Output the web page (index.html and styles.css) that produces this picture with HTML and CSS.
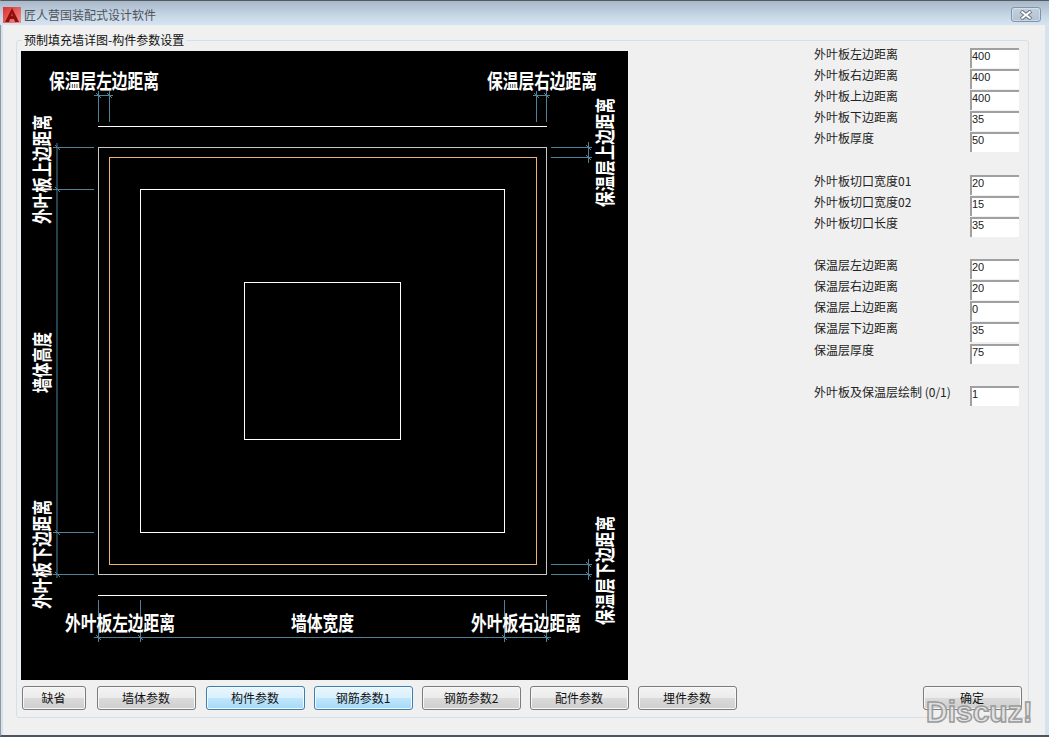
FILE: index.html
```html
<!DOCTYPE html>
<html lang="zh">
<head>
<meta charset="utf-8">
<title>匠人营国装配式设计软件</title>
<link rel="stylesheet" href="styles.css">
</head>
<body>
<div class="window">
  <header class="titlebar">
    <svg class="app-icon" width="18" height="16" viewBox="0 0 18 16">
      <defs><linearGradient id="ic" x1="0" y1="0" x2="1" y2="1"><stop offset="0" stop-color="#d8302e"/><stop offset="1" stop-color="#f08e88"/></linearGradient></defs>
      <rect width="18" height="16" fill="url(#ic)"/>
      <path d="M9 1 L16 15 L12 15 L11 12 L7 12 L6 15 L2 15 Z" fill="#8e0f0c"/>
      <path d="M9 6 L10 9 L8 9 Z" fill="#d8403a"/>
    </svg>
    <span class="title">匠人营国装配式设计软件</span>
    <button class="close" type="button" aria-label="关闭">
      <svg width="14" height="10" viewBox="0 0 14 10"><path d="M2 1 L12 9 M12 1 L2 9" stroke="#6d7682" stroke-width="4" fill="none"/><path d="M2.5 1.5 L11.5 8.5 M11.5 1.5 L2.5 8.5" stroke="#fff" stroke-width="2" fill="none"/></svg>
    </button>
  </header>
  <main class="group">
    <span class="legend">预制填充墙详图-构件参数设置</span>
    <div class="upper">
      <svg class="canvas" width="607" height="629" viewBox="21 51 607 629">
        <g fill="none" stroke="#fff" stroke-width="1" shape-rendering="crispEdges">
          <path d="M98 126.5 H547 M98 595.5 H547"/>
          <rect x="98.5" y="147.5" width="448" height="427" stroke="#c8c8c8"/>
          <rect x="109.5" y="157.5" width="427" height="407" stroke="#f0b070"/>
          <rect x="140.5" y="189.5" width="364" height="343"/>
          <rect x="244.5" y="282.5" width="156" height="157"/>
        </g>
        <g fill="none" stroke="#4d8298" stroke-width="1">
          <path d="M98.5 91 V122 M109.5 91 V122 M94 95.5 H113 M96 93 L101 98 M107 93 L112 98"/>
          <path d="M536.5 91 V122 M546.5 91 V122 M533 95.5 H550 M534 93 L539 98 M544 93 L549 98"/>
          <path d="M57 143 V578 M53 147.5 H94 M53 189.5 H94 M53 532.5 H94 M53 574.5 H94"/>
          <path d="M55 145 L60 150 M55 187 L60 192 M55 530 L60 535 M55 572 L60 577"/>
          <path d="M551 147.5 H592 M551 157.5 H592 M588.5 142 V163 M586 145 L591 150 M586 155 L591 160"/>
          <path d="M551 564.5 H592 M551 574.5 H592 M588.5 559 V580 M586 562 L591 567 M586 572 L591 577"/>
          <path d="M98.5 600 V642 M140.5 600 V642 M504.5 600 V642 M546.5 600 V642 M94 637.5 H551"/>
          <path d="M96 635 L101 640 M138 635 L143 640 M502 635 L507 640 M544 635 L549 640"/>
        </g>
        <g class="dim">
          <text transform="translate(49 89) scale(1 1.3)" textLength="110" lengthAdjust="spacingAndGlyphs">保温层左边距离</text>
          <text transform="translate(487 89) scale(1 1.3)" textLength="110" lengthAdjust="spacingAndGlyphs">保温层右边距离</text>
          <text transform="translate(50 224) rotate(-90) scale(1 1.3)" textLength="109" lengthAdjust="spacingAndGlyphs">外叶板上边距离</text>
          <text transform="translate(50 609) rotate(-90) scale(1 1.3)" textLength="109" lengthAdjust="spacingAndGlyphs">外叶板下边距离</text>
          <text transform="translate(50 393) rotate(-90) scale(1 1.3)" textLength="61" lengthAdjust="spacingAndGlyphs">墙体高度</text>
          <text transform="translate(613 207) rotate(-90) scale(1 1.3)" textLength="109" lengthAdjust="spacingAndGlyphs">保温层上边距离</text>
          <text transform="translate(613 625) rotate(-90) scale(1 1.3)" textLength="109" lengthAdjust="spacingAndGlyphs">保温层下边距离</text>
          <text transform="translate(65 631) scale(1 1.3)" textLength="110" lengthAdjust="spacingAndGlyphs">外叶板左边距离</text>
          <text transform="translate(291 631) scale(1 1.3)" textLength="63" lengthAdjust="spacingAndGlyphs">墙体宽度</text>
          <text transform="translate(471 631) scale(1 1.3)" textLength="110" lengthAdjust="spacingAndGlyphs">外叶板右边距离</text>
        </g>
      </svg>
      <form class="params">
        <div class="param-set">
          <label class="row"><span>外叶板左边距离</span><input class="field" value="400"></label>
          <label class="row"><span>外叶板右边距离</span><input class="field" value="400"></label>
          <label class="row"><span>外叶板上边距离</span><input class="field" value="400"></label>
          <label class="row"><span>外叶板下边距离</span><input class="field" value="35"></label>
          <label class="row"><span>外叶板厚度</span><input class="field" value="50"></label>
        </div>
        <div class="param-set set-cut">
          <label class="row"><span>外叶板切口宽度01</span><input class="field" value="20"></label>
          <label class="row"><span>外叶板切口宽度02</span><input class="field" value="15"></label>
          <label class="row"><span>外叶板切口长度</span><input class="field" value="35"></label>
        </div>
        <div class="param-set set-ins">
          <label class="row"><span>保温层左边距离</span><input class="field" value="20"></label>
          <label class="row"><span>保温层右边距离</span><input class="field" value="20"></label>
          <label class="row"><span>保温层上边距离</span><input class="field" value="0"></label>
          <label class="row"><span>保温层下边距离</span><input class="field" value="35"></label>
          <label class="row row-last"><span>保温层厚度</span><input class="field" value="75"></label>
        </div>
        <div class="param-set set-draw">
          <label class="row"><span>外叶板及保温层绘制 (0/1)</span><input class="field" value="1"></label>
        </div>
      </form>
    </div>
    <div class="buttons">
      <button class="btn btn-short" type="button">缺省</button>
      <button class="btn btn-wall" type="button">墙体参数</button>
      <button class="btn btn-blue" type="button">构件参数</button>
      <button class="btn btn-blue" type="button">钢筋参数1</button>
      <button class="btn" type="button">钢筋参数2</button>
      <button class="btn" type="button">配件参数</button>
      <button class="btn" type="button">埋件参数</button>
      <button class="btn btn-ok" type="button">确定</button>
    </div>
  </main>
</div>
<div class="watermark">Discuz!</div>
</body>
</html>
```

FILE: styles.css
```css
* { box-sizing: border-box; }
html, body { margin: 0; height: 737px; overflow: hidden; }
body {
  width: 1049px;
  position: relative;
  background: #f0f0f0;
  font-family: "Noto Sans CJK SC", "Liberation Sans", sans-serif;
  font-size: 12px;
  color: #111;
}
.window {
  height: 737px;
  border-top: 1px solid #555b63;
  border-bottom: 2px solid #4a5560;
  border-left: 1px solid #8b98a6;
  box-shadow: inset 2px 0 0 #d6e3ef, inset -4px 0 0 #d6e3ef;
  display: flex;
  flex-direction: column;
}
.titlebar {
  height: 24px;
  flex: none;
  margin-left: -1px;
  background: linear-gradient(#a8b8c9, #cbdbea 70%, #d5e3f1);
  display: flex;
  align-items: center;
  padding-left: 3px;
  padding-right: 8px;
}
.app-icon { flex: none; margin-top: 3px; }
.title { margin-left: 3px; color: #4f5358; font-size: 12px; line-height: 14px; margin-top: 3px; }
.close {
  margin-left: auto;
  margin-top: 3px;
  width: 30px;
  height: 15px;
  padding: 0;
  border: 1px solid #8494a8;
  border-radius: 3px;
  background: linear-gradient(#c2d0de, #b2c3d6);
  box-shadow: inset 0 0 0 1px rgba(255,255,255,.35);
  display: flex;
  align-items: center;
  justify-content: center;
}
.group {
  position: relative;
  width: 1013px;
  height: 678px;
  margin: 15px 0 0 15px;
  padding: 7px 0 0 4px;
  border: 1px solid #d4e0ea;
  border-radius: 3px;
  flex: none;
}
.legend {
  position: absolute;
  left: 5px;
  top: -8px;
  padding: 0 2px;
  background: #f0f0f0;
  font-size: 12px;
  line-height: 14px;
  color: #111;
}
.upper { display: flex; align-items: flex-start; }
.canvas { display: block; flex: none; margin-top: 3px; background: #000; }
.dim text {
  font-family: "Noto Sans CJK SC", sans-serif;
  font-weight: 700;
  font-size: 15.7px;
  fill: #fff;
}
.params { margin-left: 186px; width: 205px; }
.param-set { display: flex; flex-direction: column; gap: 1px; }
.set-cut { margin-top: 23px; }
.set-ins { margin-top: 22px; }
.set-draw { margin-top: 22px; }
.row-last { margin-top: 1px; }
.row {
  display: flex;
  justify-content: space-between;
  height: 20px;
  line-height: 14px;
  font-size: 12px;
  color: #222;
}
.row span { margin-top: -1px; }
.field {
  width: 49px;
  height: 20px;
  padding: 0 0 6px 0;
  border: solid #a0a0a0;
  border-width: 2px 0 0 2px;
  border-radius: 0;
  background: #fff;
  font-family: "Liberation Sans", sans-serif;
  font-size: 11px;
  color: #222;
  outline: none;
}
.buttons { display: flex; gap: 9px; margin: 6px 0 0 1px; width: 1000px; }
.btn {
  width: 99px;
  height: 24px;
  padding: 0 1px 0 0;
  border: 1px solid #7c7c7c;
  border-radius: 3px;
  background: linear-gradient(#f4f4f4, #ebebeb 50%, #dadada 52%, #cfcfcf);
  box-shadow: inset 0 0 0 1px #f8f8f8;
  font-family: "Noto Sans CJK SC", sans-serif;
  font-size: 12px;
  line-height: 14px;
  color: #111;
}
.btn-short { width: 64px; margin-right: 2px; }
.btn-wall { margin-right: 1px; }
.btn-blue {
  border-color: #3c7fb1;
  background: linear-gradient(#eaf6fd, #d9f0fc 50%, #bee6fd 52%, #a7d9f5);
  box-shadow: inset 0 0 0 1px #f2fafe;
}
.btn-ok { margin-left: auto; }
.watermark {
  position: absolute;
  left: 926px;
  top: 694px;
  font-family: "Liberation Sans", sans-serif;
  font-weight: 700;
  font-size: 30px;
  line-height: 36px;
  color: rgba(226,226,226,.85);
  -webkit-text-stroke: 1.5px #9b9b9b;
}
```
